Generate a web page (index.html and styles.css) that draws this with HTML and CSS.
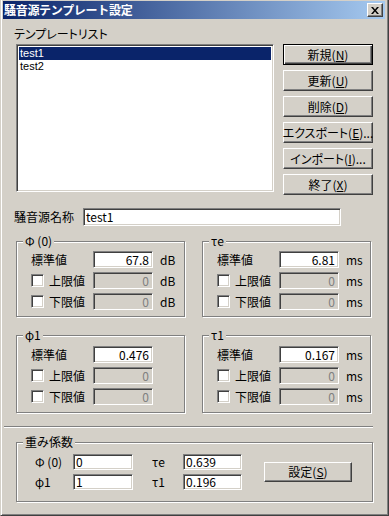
FILE: index.html
```html
<!DOCTYPE html>
<html lang="ja">
<head>
<meta charset="utf-8">
<title>騒音源テンプレート設定</title>
<link rel="stylesheet" href="styles.css">
</head>
<body>
<div class="window">
  <div class="titlebar">
    <span class="title">騒音源テンプレート設定</span>
    <span class="close"><svg width="8" height="7" viewBox="0 0 8 7"><path d="M0 0h2l2 2.5L6 0h2L5 3.5 8 7H6L4 4.5 2 7H0l3-3.5z" fill="#000"/></svg></span>
  </div>
  <div class="client">
    <div class="list-area">
      <div class="caption">テンプレートリスト</div>
      <div class="listbox">
        <div class="item selected">test1</div>
        <div class="item">test2</div>
      </div>
      <div class="buttons">
        <div class="btn default">新規(<u>N</u>)</div>
        <div class="btn">更新(<u>U</u>)</div>
        <div class="btn">削除(<u>D</u>)</div>
        <div class="btn">エクスポート(<u>E</u>)...</div>
        <div class="btn">インポート(<u>I</u>)...</div>
        <div class="btn">終了(<u>X</u>)</div>
      </div>
    </div>

    <div class="name-row">
      <span class="name-label">騒音源名称</span>
      <div class="field name">test1</div>
    </div>

    <div class="groups">
      <div class="group g-top">
        <span class="legend">Φ (0)</span>
        <div class="grid">
          <span class="lbl">標準値</span><div class="field">67.8</div><span class="unit">dB</span>
          <span class="lbl"><span class="checkbox"></span>上限値</span><div class="field disabled">0</div><span class="unit">dB</span>
          <span class="lbl"><span class="checkbox"></span>下限値</span><div class="field disabled">0</div><span class="unit">dB</span>
        </div>
      </div>
      <div class="group g-top">
        <span class="legend">τe</span>
        <div class="grid">
          <span class="lbl">標準値</span><div class="field">6.81</div><span class="unit">ms</span>
          <span class="lbl"><span class="checkbox"></span>上限値</span><div class="field disabled">0</div><span class="unit">ms</span>
          <span class="lbl"><span class="checkbox"></span>下限値</span><div class="field disabled">0</div><span class="unit">ms</span>
        </div>
      </div>
      <div class="group g-bottom">
        <span class="legend">φ1</span>
        <div class="grid">
          <span class="lbl">標準値</span><div class="field">0.476</div><span class="unit"></span>
          <span class="lbl"><span class="checkbox"></span>上限値</span><div class="field disabled">0</div><span class="unit"></span>
          <span class="lbl"><span class="checkbox"></span>下限値</span><div class="field disabled">0</div><span class="unit"></span>
        </div>
      </div>
      <div class="group g-bottom">
        <span class="legend">τ1</span>
        <div class="grid">
          <span class="lbl">標準値</span><div class="field">0.167</div><span class="unit">ms</span>
          <span class="lbl"><span class="checkbox"></span>上限値</span><div class="field disabled">0</div><span class="unit">ms</span>
          <span class="lbl"><span class="checkbox"></span>下限値</span><div class="field disabled">0</div><span class="unit">ms</span>
        </div>
      </div>
    </div>

    <div class="separator"></div>

    <div class="group weights">
      <span class="legend">重み係数</span>
      <div class="wgrid">
        <span class="wlbl">Φ (0)</span><div class="field left">0</div><span class="wlbl">τe</span><div class="field left">0.639</div>
        <span class="wlbl">φ1</span><div class="field left">1</div><span class="wlbl">τ1</span><div class="field left">0.196</div>
      </div>
      <div class="btn set">設定(<u>S</u>)</div>
    </div>
  </div>
</div>
</body>
</html>
```

FILE: styles.css
```css
* { box-sizing: border-box; }
html, body { margin: 0; padding: 0; }
body {
  width: 389px;
  height: 516px;
  overflow: hidden;
  background: #d4d0c8;
  font-family: "Noto Sans CJK JP", "Noto Sans", sans-serif;
  font-size: 12px;
  line-height: 14px;
  color: #000;
}
u { text-decoration: underline; text-underline-offset: 1px; }

.window {
  width: 389px;
  height: 516px;
  background: #d4d0c8;
  border-left: 1px solid #d4d0c8;
  border-right: 1px solid #404040;
  border-bottom: 1px solid #404040;
  box-shadow: inset 1px 0 0 #fff, inset -1px -1px 0 #808080;
  padding: 1px 3px 3px 2px;
  display: flex;
  flex-direction: column;
}

.titlebar {
  height: 18px;
  background: linear-gradient(to right, #0a246a, #a6caf0);
  display: flex;
  align-items: center;
  justify-content: space-between;
  padding: 0 2px 0 1px;
}
.title {
  color: #fff;
  font-weight: bold;
  font-size: 12px;
  letter-spacing: -0.3px;
}
.close {
  width: 16px;
  height: 14px;
  background: #d4d0c8;
  border: 1px solid;
  border-color: #fff #404040 #404040 #fff;
  box-shadow: inset -1px -1px 0 #808080;
  display: flex;
  align-items: center;
  justify-content: center;
}

.client {
  flex: 1;
  padding: 8px 0 0 13px;
}

.list-area {
  display: grid;
  grid-template-columns: 258px 90px;
  column-gap: 9px;
  row-gap: 3px;
}
.caption {
  grid-column: 1 / 3;
  margin-left: -2px;
  font-feature-settings: "palt";
}
.listbox {
  height: 148px;
  background: #fff;
  border: 1px solid;
  border-color: #808080 #fff #fff #808080;
  box-shadow: inset 1px 1px 0 #404040, inset -1px -1px 0 #d4d0c8;
  padding: 2px;
}
.item {
  height: 13px;
  line-height: 13px;
  padding-left: 1px;
  font-family: "Liberation Sans", sans-serif;
  font-size: 11px;
}
.item.selected {
  background: #0a246a;
  color: #fff;
}
.buttons {
  display: flex;
  flex-direction: column;
  gap: 5px;
}

.btn {
  height: 21px;
  background: #d4d0c8;
  border: 1px solid;
  border-color: #fff #404040 #404040 #fff;
  box-shadow: inset -1px -1px 0 #808080;
  display: flex;
  align-items: center;
  justify-content: center;
  font-feature-settings: "palt";
  white-space: nowrap;
}
.btn.default {
  border: 1px solid #000;
  box-shadow: inset 1px 1px 0 #fff, inset -1px -1px 0 #404040, inset -2px -2px 0 #808080;
}

.field {
  height: 17px;
  background: #fff;
  border: 1px solid;
  border-color: #808080 #fff #fff #808080;
  box-shadow: inset 1px 1px 0 #404040, inset -1px -1px 0 #d4d0c8;
  text-align: right;
  padding: 0 3px;
  line-height: 15px;
  white-space: nowrap;
  overflow: hidden;
}
.field.disabled {
  background: #d4d0c8;
  color: #808080;
}
.field.left { text-align: left; padding-left: 2px; }

.name-row {
  display: flex;
  align-items: center;
  margin-top: 13px;
}
.name-label {
  width: 69px;
  margin-left: -2px;
}
.field.name {
  width: 258px;
  height: 18px;
  text-align: left;
  padding-left: 2px;
}

.groups {
  display: grid;
  grid-template-columns: 169px 169px;
  column-gap: 17px;
  row-gap: 18px;
  margin-top: 15px;
}
.group {
  position: relative;
  border: 1px solid #808080;
  box-shadow: inset 1px 1px 0 #fff, 1px 1px 0 #fff;
  padding-left: 14px;
}
.g-top { height: 76px; padding-top: 9px; }
.g-bottom { height: 78px; padding-top: 10px; }
.legend {
  position: absolute;
  top: -8px;
  left: 6px;
  padding: 0 2px;
  background: #d4d0c8;
  line-height: 14px;
}
.grid {
  display: grid;
  grid-template-columns: 62px 60px auto;
  grid-auto-rows: 17px;
  row-gap: 4px;
  align-items: center;
}
.lbl {
  display: flex;
  align-items: center;
}
.checkbox {
  width: 13px;
  height: 13px;
  margin-right: 5px;
  background: #fff;
  border: 1px solid;
  border-color: #808080 #fff #fff #808080;
  box-shadow: inset 1px 1px 0 #404040, inset -1px -1px 0 #d4d0c8;
}
.unit { margin-left: 7px; }

.separator {
  margin: 13px 0 0 -12px;
  width: 369px;
  height: 2px;
  border-top: 1px solid #808080;
  border-bottom: 1px solid #fff;
}

.weights {
  margin-top: 14px;
  width: 357px;
  height: 60px;
  padding: 11px 0 0 18px;
  display: flex;
  align-items: flex-start;
}
.wgrid {
  display: grid;
  grid-template-columns: 38px 60px 19px 31px 59px;
  grid-auto-rows: 16px;
  row-gap: 4px;
  align-items: center;
}
.wgrid .field { height: 16px; line-height: 14px; }
.wgrid .wlbl:nth-child(3), .wgrid .wlbl:nth-child(7) { grid-column: 4; }
.btn.set {
  width: 88px;
  height: 20px;
  margin: 8px 0 0 22px;
}
```
